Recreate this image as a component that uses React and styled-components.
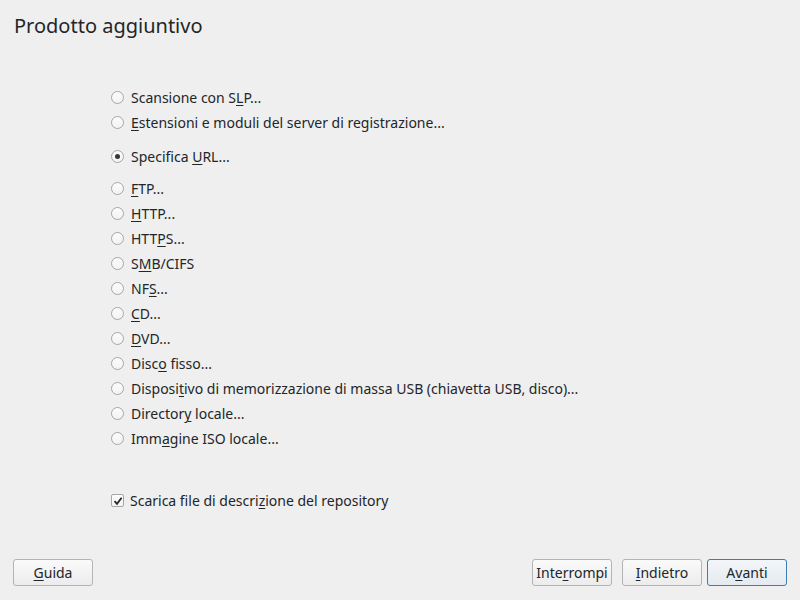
import React from 'react';
import styled, {createGlobalStyle} from 'styled-components';

const GlobalStyle = createGlobalStyle`
  html, body {
    margin: 0;
    padding: 0;
    background: #efefef;
  }
  body {
    font-family: "Noto Sans", "DejaVu Sans", sans-serif;
    color: #232629;
  }
`;

const sources = [
  ['Scansione con S', 'L', 'P...'],
  ['', 'E', 'stensioni e moduli del server di registrazione...'],
  ['Specifica ', 'U', 'RL...'],
  ['', 'F', 'TP...'],
  ['', 'H', 'TTP...'],
  ['HTT', 'P', 'S...'],
  ['S', 'M', 'B/CIFS'],
  ['NF', 'S', '...'],
  ['', 'C', 'D...'],
  ['', 'D', 'VD...'],
  ['Disc', 'o', ' fisso...'],
  ['Disposi', 't', 'ivo di memorizzazione di massa USB (chiavetta USB, disco)...'],
  ['Director', 'y', ' locale...'],
  ['Imm', 'a', 'gine ISO locale...'],
];

const Page = styled.div`
  width: 800px;
  height: 600px;
  display: flex;
  flex-direction: column;
  box-sizing: border-box;
`;

const Title = styled.h1`
  margin: 0;
  padding: 12px 0 0 14px;
  font-size: 20px;
  font-weight: 400;
  line-height: 27px;
  color: #232629;
`;

const Content = styled.div`
  flex: 1;
  padding-left: 111px;
  padding-top: 46px;
`;

const RadioList = styled.div`
  display: flex;
  flex-direction: column;
`;

const Row = styled.label`
  display: flex;
  align-items: center;
  height: 25px;
  font-size: 14px;
  gap: 7px;
  margin-top: ${p => p.$gap || 0}px;
`;

const Radio = styled.span`
  width: 13px;
  height: 13px;
  box-sizing: border-box;
  border-radius: 50%;
  border: 1px solid #a5a6a8;
  background: linear-gradient(#fcfcfc, #f3f3f3);
  display: flex;
  align-items: center;
  justify-content: center;
  flex-shrink: 0;

  &::after {
    content: '';
    width: 5px;
    height: 5px;
    border-radius: 50%;
    background: ${p => (p.$checked ? '#31363b' : 'transparent')};
  }
`;

const Mnemonic = styled.span`
  text-decoration: underline;
  text-underline-offset: 2px;
  text-decoration-thickness: 1px;
`;

const CheckRow = styled(Row)`
  margin-top: 37px;
  gap: 6px;
`;

const CheckBox = styled.span`
  width: 13px;
  height: 13px;
  box-sizing: border-box;
  border: 1px solid #a5a6a8;
  border-radius: 2px;
  background: linear-gradient(#fcfcfc, #f3f3f3);
  display: flex;
  align-items: center;
  justify-content: center;
  flex-shrink: 0;
`;

const Footer = styled.div`
  display: flex;
  align-items: center;
  padding: 0 13px 14px 13px;
`;

const Spacer = styled.div`
  flex: 1;
`;

const Button = styled.button`
  width: 80px;
  height: 27px;
  box-sizing: border-box;
  font-family: "Noto Sans", "DejaVu Sans", sans-serif;
  font-size: 14px;
  color: #232629;
  padding: 0;
  border-radius: 3px;
  border: 1px solid ${p => (p.$primary ? '#3b7eb3' : '#b3b4b5')};
  background: ${p =>
    p.$primary
      ? 'linear-gradient(#f3f6f9, #e4eaf0)'
      : 'linear-gradient(#fafafa, #ececec)'};
  margin-left: ${p => p.$ml || 0}px;
`;

const Label = ({parts}) => (
  <span>
    {parts[0]}
    <Mnemonic>{parts[1]}</Mnemonic>
    {parts[2]}
  </span>
);

const gapFor = i => (i === 2 ? 9 : i === 3 ? 7 : 0);

export default function App() {
  return (
    <Page>
      <GlobalStyle />
      <Title>Prodotto aggiuntivo</Title>
      <Content>
        <RadioList>
          {sources.map((parts, i) => (
            <Row key={i} $gap={gapFor(i)}>
              <Radio $checked={i === 2} />
              <Label parts={parts} />
            </Row>
          ))}
        </RadioList>
        <CheckRow>
          <CheckBox>
            <svg width="10" height="10" viewBox="0 0 10 10">
              <path d="M1.5 5.2 L4 7.8 L8.6 1.8" fill="none" stroke="#232629" strokeWidth="1.8" />
            </svg>
          </CheckBox>
          <Label parts={['Scarica file di descri', 'z', 'ione del repository']} />
        </CheckRow>
      </Content>
      <Footer>
        <Button>
          <Label parts={['', 'G', 'uida']} />
        </Button>
        <Spacer />
        <Button>
          <Label parts={['Inte', 'r', 'rompi']} />
        </Button>
        <Button $ml={10}>
          <Label parts={['', 'I', 'ndietro']} />
        </Button>
        <Button $primary $ml={5}>
          <Label parts={['A', 'v', 'anti']} />
        </Button>
      </Footer>
    </Page>
  );
}
